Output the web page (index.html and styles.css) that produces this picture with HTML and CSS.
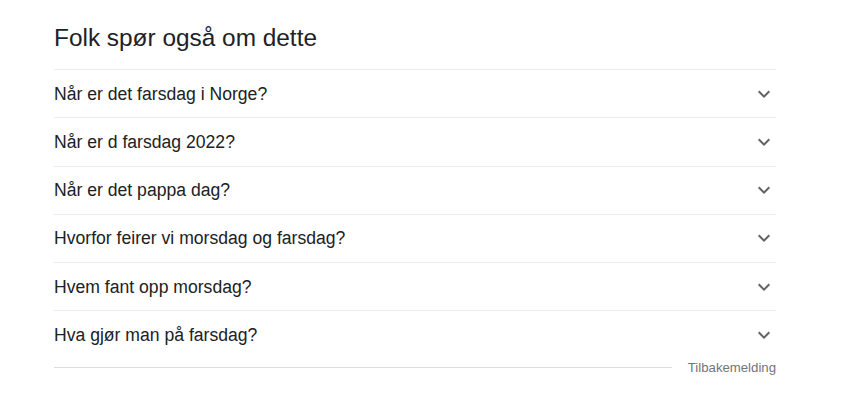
FILE: index.html
```html
<!DOCTYPE html>
<html lang="no">
<head>
<meta charset="utf-8">
<link rel="stylesheet" href="styles.css">
</head>
<body>
<div class="paa">
  <h2 class="title">Folk spør også om dette</h2>
  <div class="list">
    <div class="row"><span class="q">Når er det farsdag i Norge?</span><svg class="chev" viewBox="0 0 24 24"><path d="M7.41 8.59 12 13.17l4.59-4.58L18 10l-6 6-6-6z"/></svg></div>
    <div class="row"><span class="q">Når er d farsdag 2022?</span><svg class="chev" viewBox="0 0 24 24"><path d="M7.41 8.59 12 13.17l4.59-4.58L18 10l-6 6-6-6z"/></svg></div>
    <div class="row"><span class="q">Når er det pappa dag?</span><svg class="chev" viewBox="0 0 24 24"><path d="M7.41 8.59 12 13.17l4.59-4.58L18 10l-6 6-6-6z"/></svg></div>
    <div class="row"><span class="q">Hvorfor feirer vi morsdag og farsdag?</span><svg class="chev" viewBox="0 0 24 24"><path d="M7.41 8.59 12 13.17l4.59-4.58L18 10l-6 6-6-6z"/></svg></div>
    <div class="row"><span class="q">Hvem fant opp morsdag?</span><svg class="chev" viewBox="0 0 24 24"><path d="M7.41 8.59 12 13.17l4.59-4.58L18 10l-6 6-6-6z"/></svg></div>
    <div class="row"><span class="q">Hva gjør man på farsdag?</span><svg class="chev" viewBox="0 0 24 24"><path d="M7.41 8.59 12 13.17l4.59-4.58L18 10l-6 6-6-6z"/></svg></div>
  </div>
  <div class="footer"><div class="fline"></div><span class="feedback">Tilbakemelding</span></div>
</div>
</body>
</html>
```
FILE: styles.css
```css
html, body { margin: 0; padding: 0; background: #fff; }
body { font-family: "Liberation Sans", Arial, sans-serif; color: #202124; }
.paa { width: 722px; margin-left: 54px; padding-top: 22px; }
.title { margin: 0; font-weight: 400; font-size: 24.4px; line-height: 32px; padding-bottom: 15px; color: #202124; }
.list { border-top: 1px solid #ebebeb; }
.row { display: flex; align-items: center; justify-content: space-between; height: 47.25px; border-bottom: 1px solid #ebebeb; }
.list .row:last-child { border-bottom: none; }
.q { font-size: 17.6px; line-height: 26px; color: #202124; }
.chev { width: 24px; height: 24px; fill: #5f6368; margin-right: 0; }
.footer { display: flex; align-items: center; height: 24px; margin-top: -3px; }
.fline { flex: 1; border-top: 1px solid #dadce0; margin-right: 16px; }
.feedback { font-size: 13.2px; color: #70757a; line-height: 18px; }
```
